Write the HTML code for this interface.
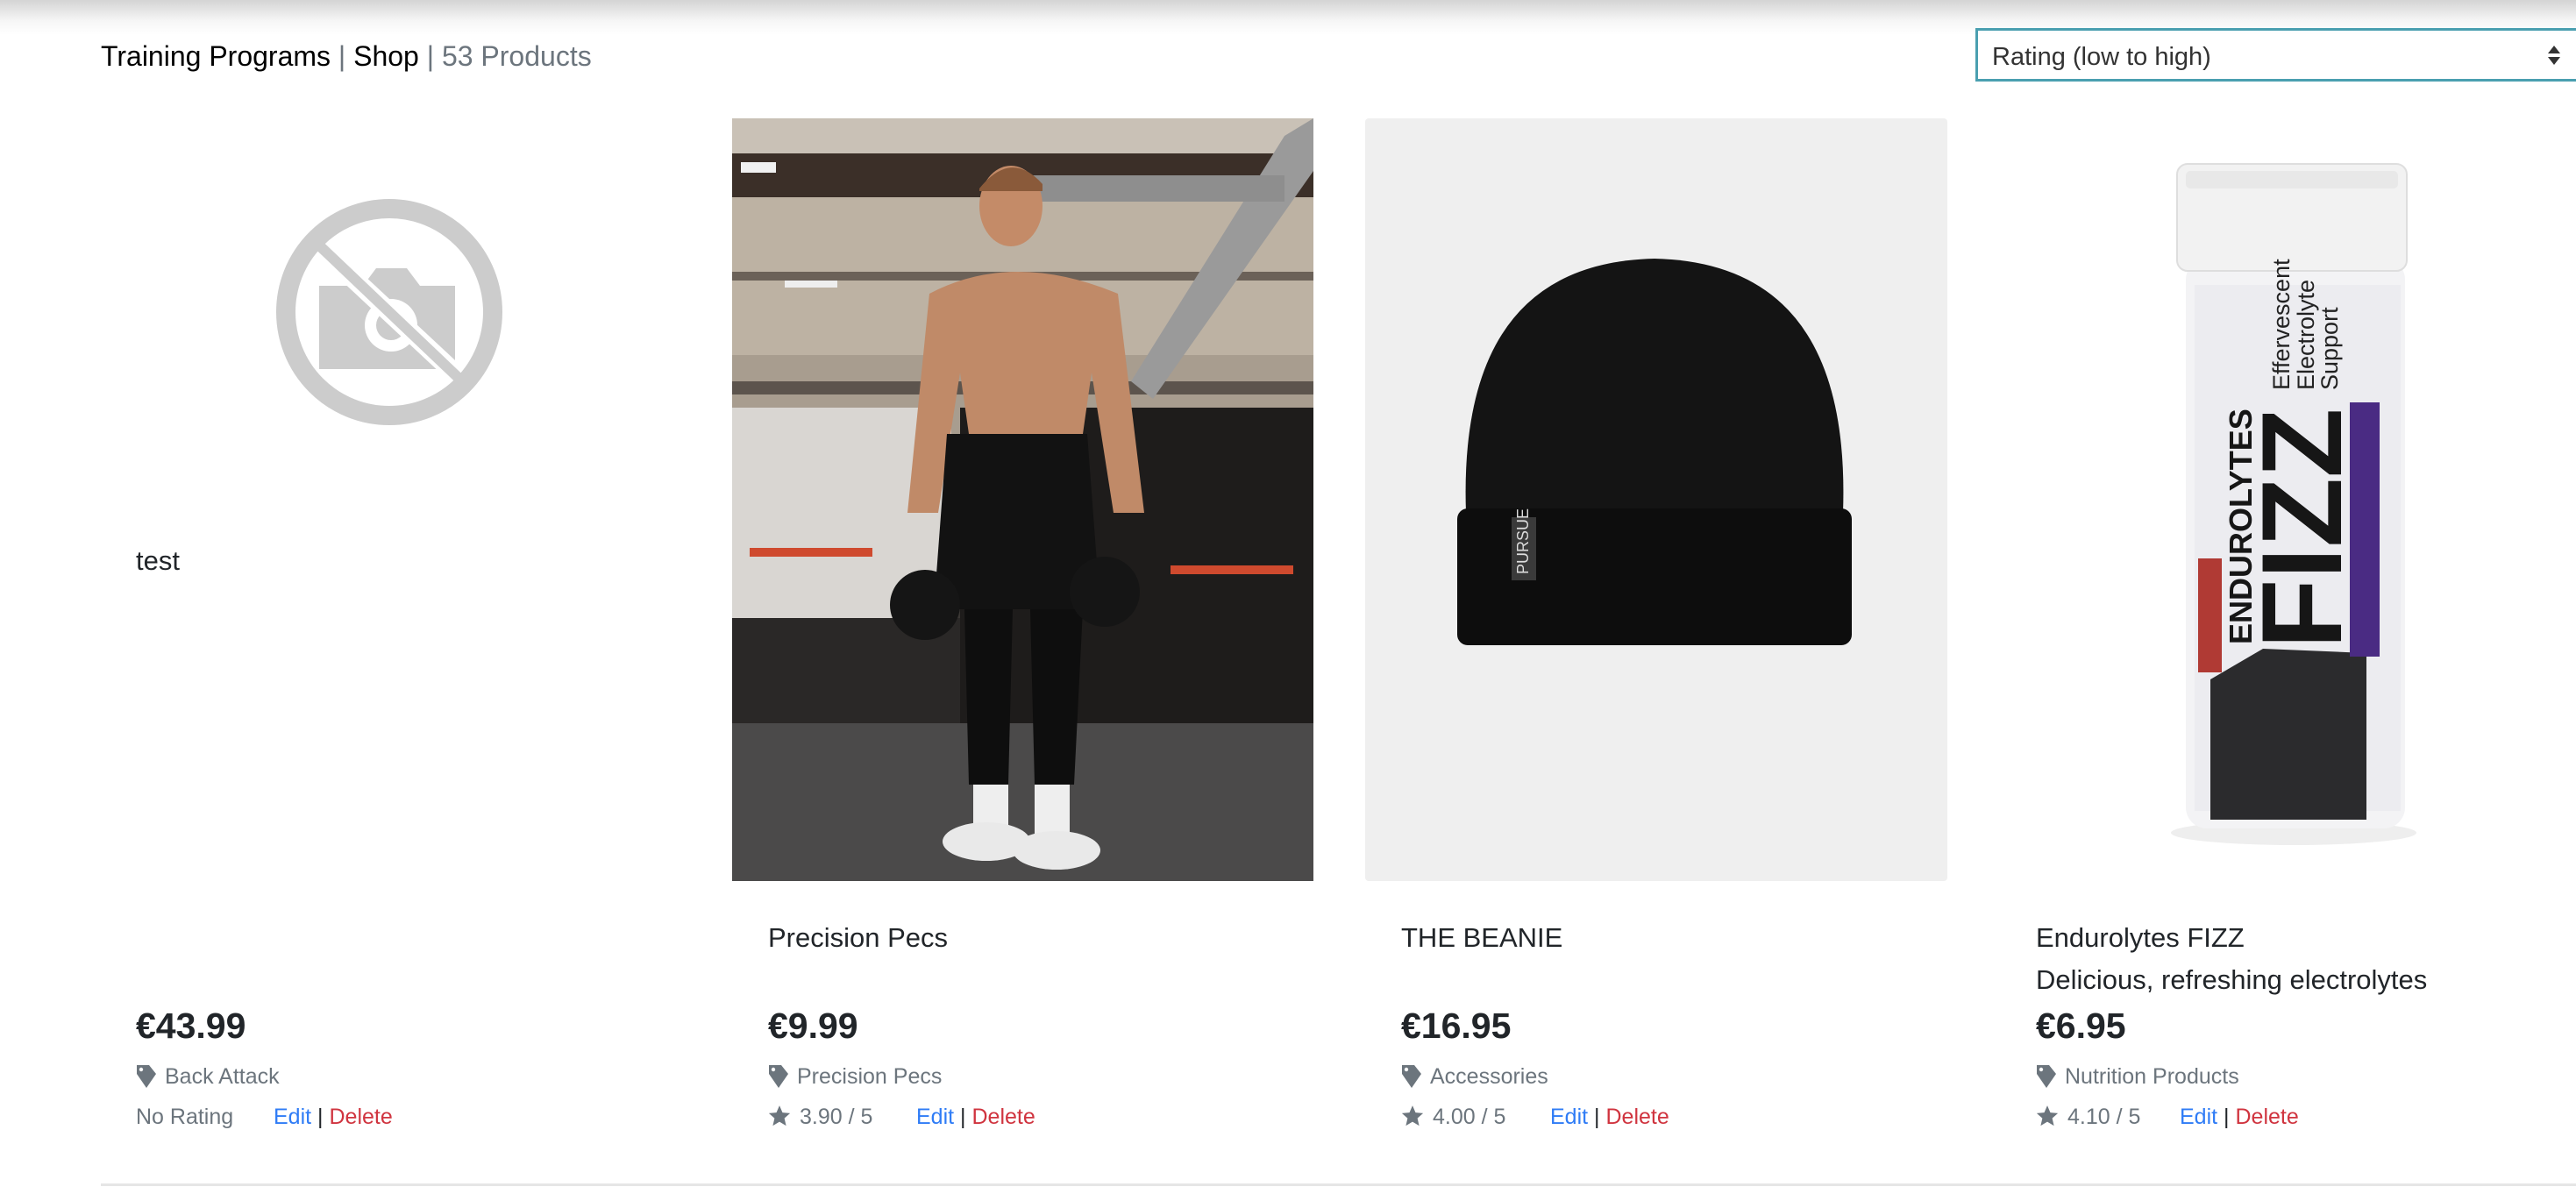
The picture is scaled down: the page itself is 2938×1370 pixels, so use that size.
<!DOCTYPE html>
<html><head><meta charset="utf-8"><style>
*{margin:0;padding:0;box-sizing:border-box}
body{width:2938px;height:1370px;background:#fff;font-family:"Liberation Sans",sans-serif;position:relative;overflow:hidden;color:#212529}
.topshade{position:absolute;left:0;top:0;width:2938px;height:40px;background:linear-gradient(#d4d4d4,#f6f6f6 60%,#fff)}
.hdr{position:absolute;left:115px;top:46px;font-size:32px;color:#000;white-space:nowrap}
.hdr .g{color:#6c757d}
.sel{position:absolute;left:2253px;top:32px;width:700px;height:61px;border:3px solid #4a9fb0;font-size:29px;color:#333;padding:14px 0 0 16px}
.arr{position:absolute;left:2905px;top:50px}
.a{position:absolute;white-space:nowrap}
.t{font-size:31px;color:#212529}
.p{font-size:41px;font-weight:bold;color:#212529}
.c{font-size:25px;color:#6c757d}
.r{font-size:25px;color:#6c757d}
.e{color:#2f7cf6}.d{color:#d0343f}.s{color:#212529}
.line{position:absolute;left:115px;top:1350px;width:2823px;height:3px;background:#e6e6e6}
svg{position:absolute}
</style></head><body>
<div class="topshade"></div>
<div class="hdr">Training Programs <span class="g">|</span> Shop <span class="g">| 53 Products</span></div>
<div class="sel">Rating (low to high)</div>
<svg class="arr" width="16" height="26" viewBox="0 0 16 26"><path d="M8 2 L15 11 H1Z M8 24 L15 15 H1Z" fill="#333"/></svg>

<svg style="left:314px;top:226px" width="260" height="260" viewBox="0 0 260 260">
<circle cx="130" cy="130" r="118" fill="none" stroke="#cccccc" stroke-width="22"/>
<path d="M50 100 h50 l15 -20 h35 l15 20 h40 v95 h-155z" fill="#cccccc"/>
<circle cx="132" cy="145" r="30" fill="#fff"/><circle cx="132" cy="145" r="17" fill="#ccc"/>
<line x1="55" y1="60" x2="205" y2="200" stroke="#fff" stroke-width="22"/>
<line x1="48" y1="52" x2="212" y2="208" stroke="#ccc" stroke-width="12"/>
</svg>
<div class="a t" style="left:155px;top:622px">test</div>

<svg style="left:835px;top:135px" width="663" height="870" viewBox="0 0 663 870">
<rect width="663" height="870" fill="#3a3734"/>
<rect width="663" height="40" fill="#c9c1b6"/>
<rect y="40" width="663" height="50" fill="#3b2f28"/>
<rect y="90" width="663" height="180" fill="#bdb2a3"/>
<rect y="270" width="663" height="140" fill="#a89d8f"/>
<rect y="175" width="663" height="10" fill="#6b6158"/>
<rect y="300" width="663" height="15" fill="#5c544d"/>
<rect x="0" y="330" width="250" height="240" fill="#d9d6d2"/>
<rect x="260" y="330" width="403" height="370" fill="#1e1c1b"/>
<rect x="0" y="570" width="260" height="130" fill="#2a2827"/>
<rect x="10" y="50" width="40" height="12" fill="#f1f1f1"/>
<rect x="60" y="185" width="60" height="8" fill="#eee"/>
<path d="M663 0 L663 60 L480 320 L455 300 L630 20Z" fill="#9a9a9a"/>
<rect x="300" y="65" width="330" height="30" fill="#8e8e8e"/>
<rect x="20" y="490" width="140" height="10" fill="#cf4a2e"/>
<rect x="500" y="510" width="140" height="10" fill="#cf4a2e"/>
<rect y="690" width="663" height="180" fill="#4b4a4a"/>
<ellipse cx="318" cy="100" rx="36" ry="46" fill="#c48b68"/>
<path d="M282 80 q36 -45 72 -5 v8 h-72z" fill="#8a5a3a"/>
<path d="M225 200 q95 -50 215 0 l30 250 h-35 l-25 -160 -10 70 h-130 l-10 -70 -25 160 h-35z" fill="#c08a68"/>
<path d="M245 360 h160 l15 200 h-190z" fill="#121212"/>
<path d="M265 560 h55 l-5 200 h-45z M340 560 h60 l-10 200 h-45z" fill="#0e0e0e"/>
<rect x="275" y="760" width="40" height="60" fill="#eee"/><rect x="345" y="760" width="40" height="60" fill="#eee"/>
<ellipse cx="290" cy="825" rx="50" ry="22" fill="#e9e9e9"/><ellipse cx="370" cy="835" rx="50" ry="22" fill="#e9e9e9"/>
<circle cx="220" cy="555" r="40" fill="#151515"/><circle cx="425" cy="540" r="40" fill="#151515"/>
</svg>
<div class="a t" style="left:876px;top:1052px">Precision Pecs</div>

<svg style="left:1557px;top:135px" width="664" height="870" viewBox="0 0 664 870">
<rect width="664" height="870" rx="4" fill="#efefef"/>
<path d="M115 450 Q105 165 330 160 Q555 165 545 450Z" fill="#141414"/>
<rect x="105" y="445" width="450" height="156" rx="12" fill="#0d0d0d"/>
<rect x="167" y="455" width="28" height="72" fill="#3a3a3a"/>
<text x="0" y="0" transform="translate(186 520) rotate(-90)" font-size="18" fill="#ddd" font-family="Liberation Sans">PURSUE</text>
</svg>
<div class="a t" style="left:1598px;top:1052px">THE BEANIE</div>

<svg style="left:2281px;top:135px" width="657" height="870" viewBox="0 0 657 870">
<rect width="657" height="870" fill="#fff"/>
<ellipse cx="335" cy="815" rx="140" ry="14" fill="#eee"/>
<rect x="212" y="160" width="250" height="650" rx="24" fill="#f3f3f5"/>
<rect x="202" y="52" width="262" height="122" rx="12" fill="#f2f2f2" stroke="#dedede" stroke-width="2"/>
<rect x="212" y="60" width="242" height="20" rx="5" fill="#e8e8e8"/>
<rect x="222" y="190" width="235" height="600" fill="#ececf0"/>
<path d="M240 640 L300 605 L418 610 L418 800 L240 800Z" fill="#2b2b2d"/>
<text transform="translate(389 605) rotate(-90)" font-size="130" font-weight="bold" fill="#161616" font-family="Liberation Sans">FIZZ</text>
<text transform="translate(287 600) rotate(-90)" font-size="36" font-weight="bold" fill="#161616" font-family="Liberation Sans">ENDUROLYTES</text>
<text transform="translate(330 310) rotate(-90)" font-size="27" fill="#222" font-family="Liberation Sans">Effervescent</text>
<text transform="translate(358 310) rotate(-90)" font-size="27" fill="#222" font-family="Liberation Sans">Electrolyte</text>
<text transform="translate(385 310) rotate(-90)" font-size="27" fill="#222" font-family="Liberation Sans">Support</text>
<rect x="399" y="324" width="34" height="290" fill="#4a2b83"/>
<rect x="226" y="502" width="27" height="130" fill="#b03a34"/>
</svg>
<div class="a t" style="left:2322px;top:1052px">Endurolytes FIZZ</div>
<div class="a t" style="left:2322px;top:1100px">Delicious, refreshing electrolytes</div>

<div class="a p" style="left:155px;top:1147px">€43.99</div>
<div class="a p" style="left:876px;top:1147px">€9.99</div>
<div class="a p" style="left:1598px;top:1147px">€16.95</div>
<div class="a p" style="left:2322px;top:1147px">€6.95</div>

<svg width="0" height="0"><defs>
<symbol id="tag" viewBox="0 0 24 28"><path d="M1 1 h14 l8 10 -11 16 -11 -16z" fill="#6c757d"/><circle cx="6" cy="6" r="2.2" fill="#fff"/></symbol>
<symbol id="star" viewBox="0 0 24 24"><path d="M12 1l3.2 7.4 8 .7-6 5.3 1.8 7.9L12 18.1 5 22.3l1.8-7.9-6-5.3 8-.7z" fill="#6c757d"/></symbol>
</defs></svg>

<svg style="left:155px;top:1214px" width="24" height="28"><use href="#tag"/></svg>
<div class="a c" style="left:188px;top:1214px">Back Attack</div>
<svg style="left:876px;top:1214px" width="24" height="28"><use href="#tag"/></svg>
<div class="a c" style="left:909px;top:1214px">Precision Pecs</div>
<svg style="left:1598px;top:1214px" width="24" height="28"><use href="#tag"/></svg>
<div class="a c" style="left:1631px;top:1214px">Accessories</div>
<svg style="left:2322px;top:1214px" width="24" height="28"><use href="#tag"/></svg>
<div class="a c" style="left:2355px;top:1214px">Nutrition Products</div>

<div class="a r" style="left:155px;top:1260px">No Rating</div>
<div class="a r" style="left:312px;top:1260px"><span class="e">Edit</span> <span class="s">|</span> <span class="d">Delete</span></div>

<svg style="left:876px;top:1260px" width="26" height="26"><use href="#star"/></svg>
<div class="a r" style="left:912px;top:1260px">3.90 / 5</div>
<div class="a r" style="left:1045px;top:1260px"><span class="e">Edit</span> <span class="s">|</span> <span class="d">Delete</span></div>

<svg style="left:1598px;top:1260px" width="26" height="26"><use href="#star"/></svg>
<div class="a r" style="left:1634px;top:1260px">4.00 / 5</div>
<div class="a r" style="left:1768px;top:1260px"><span class="e">Edit</span> <span class="s">|</span> <span class="d">Delete</span></div>

<svg style="left:2322px;top:1260px" width="26" height="26"><use href="#star"/></svg>
<div class="a r" style="left:2358px;top:1260px">4.10 / 5</div>
<div class="a r" style="left:2486px;top:1260px"><span class="e">Edit</span> <span class="s">|</span> <span class="d">Delete</span></div>

<div class="line"></div>
</body></html>
